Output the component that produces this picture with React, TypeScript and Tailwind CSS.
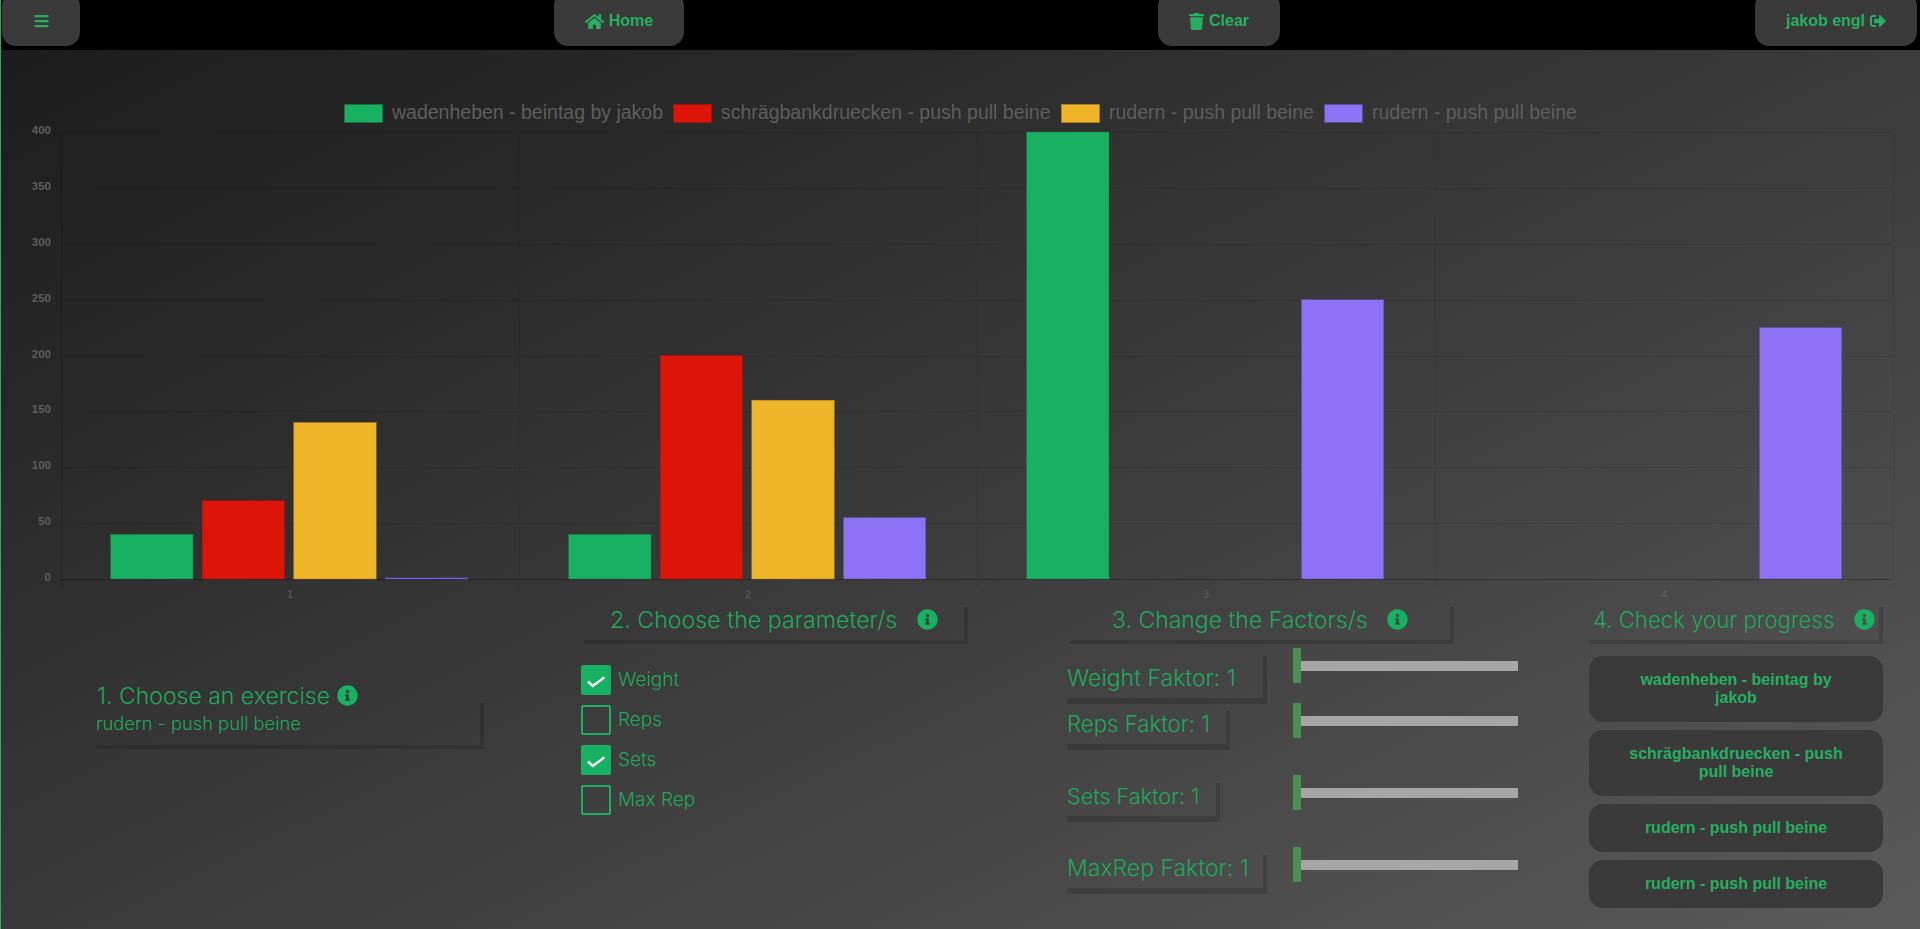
import type { ReactNode } from "react";
import { FaBars, FaHome, FaTrash, FaSignOutAlt, FaInfoCircle } from "react-icons/fa";

const groups = [
  [40, 70, 140, 1],
  [40, 200, 160, 55],
  [400, 0, 0, 250],
  [0, 0, 0, 225],
];
const colors = ["#18b162", "#dc1508", "#f0b429", "#8e72f5"];
const strokes = ["#16794a", "#a81006", "#b98a20", "#5c49a0"];
const legend = [
  { x: 343, w: 39, tx: 391, c: 0, label: "wadenheben - beintag by jakob" },
  { x: 672, w: 39, tx: 720, c: 1, label: "schrägbankdruecken - push pull beine" },
  { x: 1060, w: 39, tx: 1108, c: 2, label: "rudern - push pull beine" },
  { x: 1323, w: 39, tx: 1371, c: 3, label: "rudern - push pull beine" },
];

function Chart() {
  const top = 82;
  const base = 529;
  const left = 60;
  const cat = 458;
  return (
    <svg width="1920" height="557" className="block shrink-0" style={{ fontFamily: "'Liberation Sans', sans-serif" }}>
      {legend.map((l) => (
        <g key={l.tx}>
          <rect x={l.x + 0.5} y={54.5} width={l.w - 1} height={18} fill={colors[l.c]} stroke={strokes[l.c]} strokeWidth="0.6" />
          <text x={l.tx} y={69} fontSize="19.5" fill="#5e5e5e">{l.label}</text>
        </g>
      ))}
      {[0, 50, 100, 150, 200, 250, 300, 350, 400].map((v) => {
        const y = Math.round(base - (v / 400) * (base - top));
        return (
          <g key={v}>
            <line x1={left} x2={1891} y1={y + 0.5} y2={y + 0.5} stroke={v === 0 ? "rgba(0,0,0,0.3)" : "rgba(0,0,0,0.07)"} />
            <text x={50} y={y + 2} fontSize="11.5" fontWeight="bold" textAnchor="end" fill="#5e5e5e">{v}</text>
          </g>
        );
      })}
      {[0, 1, 2, 3, 4].map((i) => (
        <line key={i} x1={left + i * cat + 0.5} x2={left + i * cat + 0.5} y1={top} y2={base + 10} stroke={i === 0 ? "rgba(0,0,0,0.2)" : "rgba(0,0,0,0.07)"} />
      ))}
      {[1, 2, 3, 4].map((n) => (
        <text key={n} x={left + (n - 0.5) * cat} y={548} fontSize="11" textAnchor="middle" fill="#5e5e5e">{n}</text>
      ))}
      {groups.map((g, gi) =>
        g.map((v, i) => {
          if (!v) return null;
          const h = (v / 400) * (base - top);
          const x = left + gi * cat + 49.6 + i * 91.6;
          return <rect key={i} x={x} y={base - h} width={82.4} height={h} fill={colors[i]} stroke={strokes[i]} strokeWidth="0.5" />;
        })
      )}
    </svg>
  );
}

const heading = "leading-[26px] text-[#1fa85c] font-light whitespace-nowrap";

function Info({ className = "" }: { className?: string }) {
  return <FaInfoCircle className={`text-[#18b162] w-[21px] h-[21px] shrink-0 ${className}`} />;
}

function NavBtn({ className = "", children }: { className?: string; children: ReactNode }) {
  return (
    <button className={`h-[54px] -mt-[8px] pt-[4px] rounded-[14px] bg-[#3a3a3a] text-[#27ae60] font-bold text-[16px] flex items-center justify-center gap-[5px] ${className}`}>
      {children}
    </button>
  );
}

function Check({ on, label }: { on: boolean; label: string }) {
  return (
    <div className="flex items-center h-[30px] gap-[7px]">
      <div className={`relative w-[30px] h-[30px] rounded-[2px] border-2 border-[#18b162] ${on ? "bg-[#18b162]" : ""}`}>
        {on && (
          <svg width="30" height="30" viewBox="0 0 30 30" className="absolute -left-[2px] -top-[2px]">
            <polyline points="7,16.5 11.8,21 23.3,12.4" fill="none" stroke="#ffffff" strokeWidth="2.4" />
          </svg>
        )}
      </div>
      <span className="text-[19px] text-[#1fa85c] font-light">{label}</span>
    </div>
  );
}

function Slider({ label, boxClass, rowH, size }: { label: string; boxClass: string; rowH: string; size: string }) {
  return (
    <div className={`flex items-start ${rowH}`}>
      <div className="w-[226px] shrink-0 pt-[8px]">
        <div className={`border-r-4 border-b-[6px] border-[#00000026] flex items-end pb-[7px] ${boxClass}`}>
          <span className={`${heading} ${size}`}>{label}</span>
        </div>
      </div>
      <div className="flex items-center h-[35px]">
        <div className="w-[8px] h-[35px] bg-[#4a9150]" />
        <div className="w-[217px] h-[10px] bg-[#a6a6a6]" />
      </div>
    </div>
  );
}

function ProgressBtn({ children, h }: { children: ReactNode; h: string }) {
  return (
    <button
      className={`w-[294px] ${h} rounded-[14px] bg-[#3a3a3a] text-[#27ae60] font-bold text-[16px] leading-[18px] px-[36px] text-center`}
      style={{ fontFamily: "'Liberation Sans', sans-serif" }}
    >
      {children}
    </button>
  );
}

export default function App() {
  return (
    <div
      className="w-[1920px] h-[929px] overflow-hidden flex flex-col bg-gradient-to-br from-[#1b1b1b] to-[#5a5a5a] border-l border-[#27ae60]"
      style={{ fontFamily: "'Liberation Sans', sans-serif" }}
    >
      <header className="h-[50px] shrink-0 bg-black flex items-start -ml-px pl-[2px] pr-[3px] overflow-hidden">
        <NavBtn className="w-[78px]"><FaBars className="w-[15px] h-[16px]" /></NavBtn>
        <NavBtn className="w-[130px] ml-[474px]"><FaHome className="w-[19px] h-[17px]" />Home</NavBtn>
        <NavBtn className="w-[122px] ml-[474px]"><FaTrash className="w-[15px] h-[17px]" />Clear</NavBtn>
        <NavBtn className="w-[162px] ml-auto">jakob engl<FaSignOutAlt className="w-[16px] h-[16px]" /></NavBtn>
      </header>
      <Chart />
      <div className="flex items-start" style={{ fontFamily: "Inter, sans-serif" }}>
        <div className="w-[388px] ml-[95px] pt-[76px]">
          <div className={`flex items-start gap-[7px] ml-[1px] text-[23px] ${heading}`}>1. Choose an exercise<Info className="mt-[2px]" /></div>
          <div className="h-[46px] -mt-[6px] border-r-4 border-b-4 border-[#00000026]">
            <div className="text-[18.3px] text-[#1fa85c] font-light leading-[28px] pt-[6px]">rudern - push pull beine</div>
          </div>
        </div>
        <div className="w-[388px] ml-[100px]">
          <div className="w-[384px] h-[37px] flex items-start pl-[26px] gap-[20px] border-r-4 border-b-4 border-[#00000026]">
            <span className={`text-[23.2px] ${heading}`}>2. Choose the parameter/s</span><Info className="mt-[2px]" />
          </div>
          <div className="flex flex-col gap-[10px] mt-[21px] -ml-[3px]">
            <Check on label="Weight" />
            <Check on={false} label="Reps" />
            <Check on label="Sets" />
            <Check on={false} label="Max Rep" />
          </div>
        </div>
        <div className="w-[500px] ml-[95px]">
          <div className="w-[384px] h-[37px] flex items-start pl-[42px] gap-[19px] ml-[3px] border-r-4 border-b-4 border-[#00000026]">
            <span className={`text-[23px] ${heading}`}>3. Change the Factors/s</span><Info className="mt-[2px]" />
          </div>
          <div className="flex flex-col mt-[4px]">
            <Slider label="Weight Faktor: 1" size="text-[23px]" boxClass="w-[200px] h-[48px]" rowH="h-[55px]" />
            <Slider label="Reps Faktor: 1" size="text-[22.2px]" boxClass="w-[163px] h-[39px]" rowH="h-[72px]" />
            <Slider label="Sets Faktor: 1" size="text-[21.6px]" boxClass="w-[153px] h-[39px]" rowH="h-[72px]" />
            <Slider label="MaxRep Faktor: 1" size="text-[23px]" boxClass="w-[200px] h-[39px]" rowH="h-[72px]" />
          </div>
        </div>
        <div className="w-[294px] ml-[22px]">
          <div className="h-[37px] flex items-start justify-between pl-[4px] pr-[4px] border-r-4 border-b-4 border-[#00000026]">
            <span className={`text-[22.2px] ${heading}`}>4. Check your progress</span><Info className="mt-[2px]" />
          </div>
          <div className="flex flex-col gap-[8px] mt-[12px]">
            <ProgressBtn h="h-[66px]">wadenheben - beintag by jakob</ProgressBtn>
            <ProgressBtn h="h-[66px]">schrägbankdruecken - push pull beine</ProgressBtn>
            <ProgressBtn h="h-[48px]">rudern - push pull beine</ProgressBtn>
            <ProgressBtn h="h-[48px]">rudern - push pull beine</ProgressBtn>
          </div>
        </div>
      </div>
    </div>
  );
}
